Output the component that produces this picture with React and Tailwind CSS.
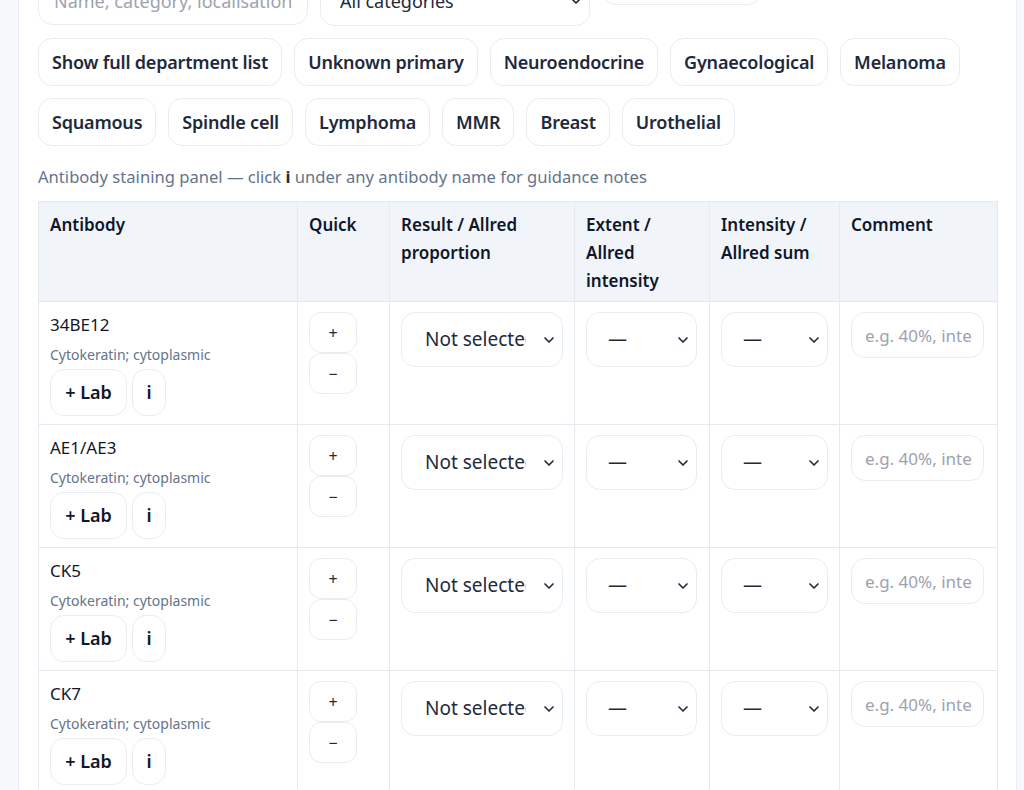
import { ChevronDown } from "lucide-react";

const chips1 = ["Show full department list", "Unknown primary", "Neuroendocrine", "Gynaecological", "Melanoma"];
const chips2 = ["Squamous", "Spindle cell", "Lymphoma", "MMR", "Breast", "Urothelial"];

const antibodies = [
  { name: "34BE12", note: "Cytokeratin; cytoplasmic" },
  { name: "AE1/AE3", note: "Cytokeratin; cytoplasmic" },
  { name: "CK5", note: "Cytokeratin; cytoplasmic" },
  { name: "CK7", note: "Cytokeratin; cytoplasmic" },
];

function Chip({ label }) {
  return (
    <button className="h-[48px] px-[13px] rounded-[14px] border border-[#e8edf3] bg-white text-[18px] tracking-[-0.2px] font-semibold text-[#1e293b] whitespace-nowrap">
      {label}
    </button>
  );
}

function Select({ value, className, textClass }) {
  return (
    <div className={"relative " + className}>
      <select className={"appearance-none w-full h-full rounded-[14px] border border-[#e8edf3] bg-white text-[#1e293b] outline-none " + textClass}>
        <option>{value}</option>
      </select>
      <ChevronDown className="absolute right-[6px] top-1/2 -translate-y-1/2 w-[16px] h-[16px] text-[#1e293b] pointer-events-none" strokeWidth={2.5} />
    </div>
  );
}

function Row({ item }) {
  return (
    <tr className="align-top">
      <td className="border border-[#e5eaf0] pt-[10px] pb-[8px] px-[11px]">
        <div className="text-[17px] leading-[26px] text-[#0f172a]">{item.name}</div>
        <div className="mt-[7px] text-[14px] leading-[20px] text-[#64748b]">{item.note}</div>
        <div className="mt-[4px] flex gap-[5px]">
          <button className="h-[47px] w-[77px] rounded-[14px] border border-[#e8edf3] bg-white text-[18px] font-semibold text-[#0f172a]">
            + Lab
          </button>
          <button className="h-[47px] w-[34px] rounded-[14px] border border-[#e8edf3] bg-white text-[18px] font-semibold text-[#0f172a]">
            i
          </button>
        </div>
      </td>
      <td className="border border-[#e5eaf0] pt-[10px] px-[11px]">
        <div className="flex flex-col w-[48px]">
          <button className="h-[41px] rounded-[12px] border border-[#e8edf3] bg-white text-[16px] text-[#1e293b]">+</button>
          <button className="h-[41px] rounded-[12px] border border-[#e8edf3] bg-white text-[16px] text-[#1e293b]">−</button>
        </div>
      </td>
      <td className="border border-[#e5eaf0] pt-[10px] px-[11px]">
        <Select value="Not selected" className="w-[162px] h-[55px]" textClass="pl-[23px] pr-[36px] text-[19px]" />
      </td>
      <td className="border border-[#e5eaf0] pt-[10px] px-[11px]">
        <Select value="—" className="w-[111px] h-[55px]" textClass="pl-[21px] pr-[30px] text-[19px]" />
      </td>
      <td className="border border-[#e5eaf0] pt-[10px] px-[11px]">
        <Select value="—" className="w-[107px] h-[55px]" textClass="pl-[21px] pr-[30px] text-[19px]" />
      </td>
      <td className="border border-[#e5eaf0] pt-[10px] px-[11px]">
        <input
          placeholder="e.g. 40%, intensity"
          className="w-[133px] h-[46px] rounded-[14px] border border-[#e8edf3] bg-white pl-[13px] pr-[10px] text-[17px] text-[#1e293b] placeholder:text-[#9ca3af] outline-none"
        />
      </td>
    </tr>
  );
}

export default function App() {
  return (
    <div className="min-h-screen bg-[#f6f8fb] pl-[18px] pr-[7px] overflow-hidden" style={{ fontFamily: '"Segoe UI", "Noto Sans", sans-serif' }}>
      <div className="-mt-[49px] bg-white border-x border-[#e8edf3] px-[19px] pb-[20px]">
        <div className="flex items-end gap-3">
          <input
            placeholder="Name, category, localisation"
            className="w-[270px] h-[48px] rounded-[14px] border border-[#e8edf3] px-[15px] text-[18px] placeholder:text-[#9ca3af] outline-none"
          />
          <Select value="All categories" className="w-[270px] h-[50px] -mb-[1px]" textClass="pl-[19px] pr-[30px] text-[18px]" />
          <button className="w-[160px] h-[54px] mb-[20px] rounded-[14px] border border-[#e8edf3] bg-white text-[18px] font-semibold text-[#1e293b]">
            Clear filters
          </button>
        </div>

        <div className="mt-[13px] flex flex-wrap gap-[12px]">
          {chips1.map((c) => (
            <Chip key={c} label={c} />
          ))}
        </div>
        <div className="mt-[12px] flex flex-wrap gap-[12px]">
          {chips2.map((c) => (
            <Chip key={c} label={c} />
          ))}
        </div>

        <p className="mt-[19px] text-[16.6px] leading-[24px] text-[#64748b]">
          Antibody staining panel — click <b className="text-[#1e293b]">i</b> under any antibody name for guidance notes
        </p>

        <table className="mt-[12px] w-[959px] border-collapse table-fixed">
          <colgroup>
            <col className="w-[259px]" />
            <col className="w-[92px]" />
            <col className="w-[185px]" />
            <col className="w-[135px]" />
            <col className="w-[130px]" />
            <col className="w-[158px]" />
          </colgroup>
          <thead>
            <tr className="bg-[#f1f5f9] text-left align-top">
              {["Antibody", "Quick", "Result / Allred proportion", "Extent / Allred intensity", "Intensity / Allred sum", "Comment"].map((h) => (
                <th key={h} className="border border-[#e5eaf0] pt-[9px] pb-[6px] px-[11px] text-[17px] leading-[28px] font-semibold text-[#0f172a]">
                  {h}
                </th>
              ))}
            </tr>
          </thead>
          <tbody>
            {antibodies.map((a) => (
              <Row key={a.name} item={a} />
            ))}
          </tbody>
        </table>
      </div>
    </div>
  );
}
